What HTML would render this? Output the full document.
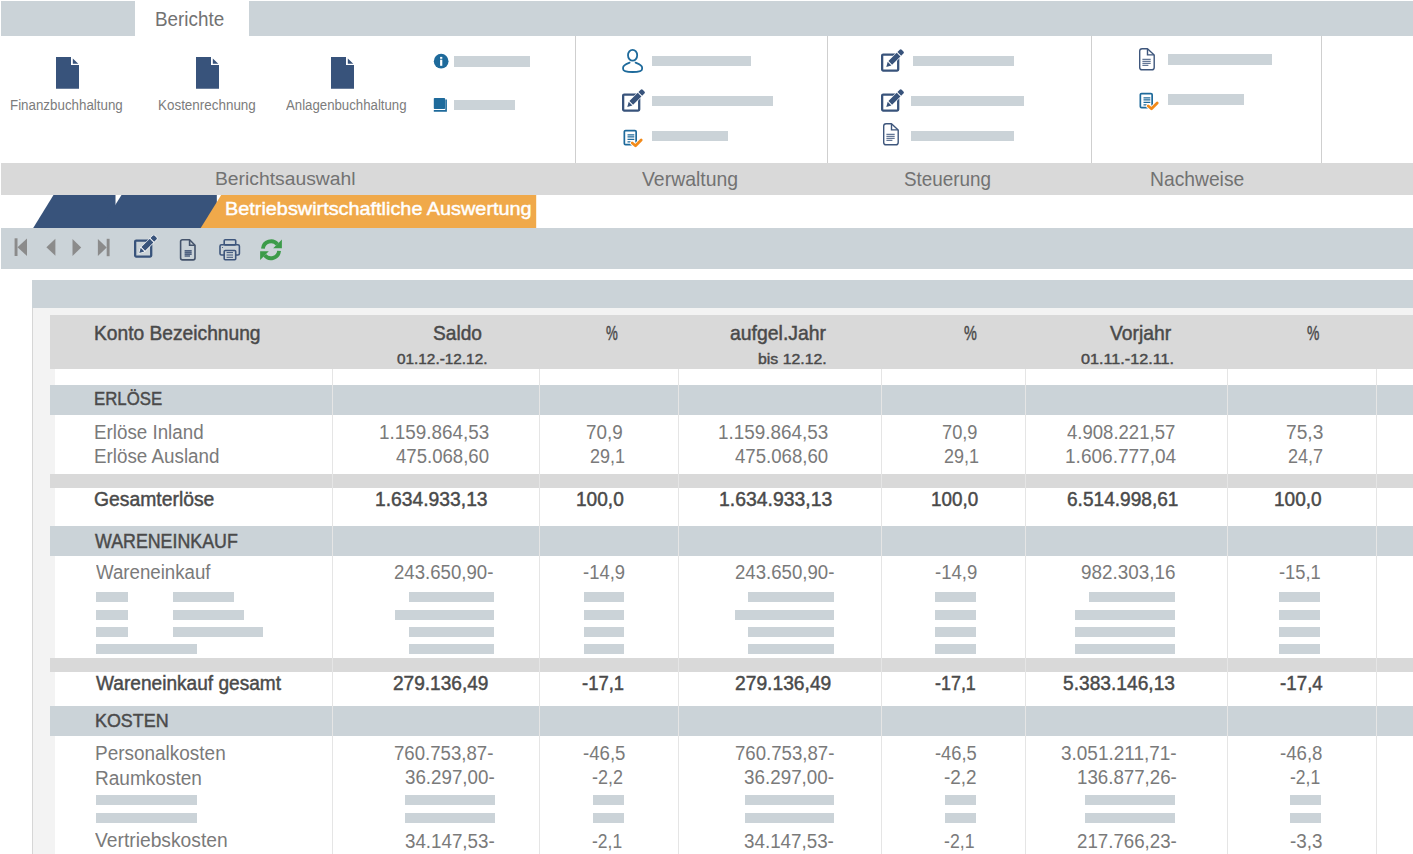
<!DOCTYPE html>
<html><head><meta charset="utf-8"><style>
html,body{margin:0;padding:0;}
body{width:1413px;height:854px;position:relative;overflow:hidden;background:#fff;font-family:"Liberation Sans",sans-serif;}
.t{position:absolute;white-space:nowrap;line-height:0;transform-origin:0 0;}
</style></head><body>
<div style="position:absolute;left:1px;top:1px;width:134px;height:35px;background:#cbd3d8;"></div>
<div style="position:absolute;left:249px;top:1px;width:1164px;height:35px;background:#cbd3d8;"></div>
<div class="t" style="left:155.30px;top:19.05px;font-size:20.06px;transform:scaleX(0.9407);color:#727272;">Berichte</div>
<div style="position:absolute;left:575px;top:36px;width:1px;height:127px;background:#cfcfcf;"></div>
<div style="position:absolute;left:827px;top:36px;width:1px;height:127px;background:#cfcfcf;"></div>
<div style="position:absolute;left:1091px;top:36px;width:1px;height:127px;background:#cfcfcf;"></div>
<div style="position:absolute;left:1321px;top:36px;width:1px;height:127px;background:#cfcfcf;"></div>
<div style="position:absolute;left:1px;top:163px;width:1412px;height:32px;background:#d9d9d9;"></div>
<div class="t" style="left:214.50px;top:179.25px;font-size:19.19px;transform:scaleX(1.0056);color:#727272;">Berichtsauswahl</div>
<div class="t" style="left:642.30px;top:179.25px;font-size:19.48px;transform:scaleX(0.9968);color:#727272;">Verwaltung</div>
<div class="t" style="left:903.65px;top:179.25px;font-size:19.48px;transform:scaleX(0.9690);color:#727272;">Steuerung</div>
<div class="t" style="left:1150.15px;top:179.25px;font-size:19.48px;transform:scaleX(0.9896);color:#727272;">Nachweise</div>
<div class="t" style="left:9.85px;top:104.51px;font-size:14.39px;transform:scaleX(0.9281);color:#7c7c7c;">Finanzbuchhaltung</div>
<div class="t" style="left:157.50px;top:104.51px;font-size:14.39px;transform:scaleX(0.9339);color:#7c7c7c;">Kostenrechnung</div>
<div class="t" style="left:286.00px;top:104.51px;font-size:14.39px;transform:scaleX(0.9197);color:#7c7c7c;">Anlagenbuchhaltung</div>
<svg style="position:absolute;left:56px;top:57px" width="24" height="32" viewBox="0 0 24 32"><path d="M0,0H15V8H23V31.7H0Z" fill="#38537b"/><path d="M16.8,1.4L22.3,6.8H16.8Z" fill="#38537b"/></svg>
<svg style="position:absolute;left:196px;top:57px" width="24" height="32" viewBox="0 0 24 32"><path d="M0,0H15V8H23V31.7H0Z" fill="#38537b"/><path d="M16.8,1.4L22.3,6.8H16.8Z" fill="#38537b"/></svg>
<svg style="position:absolute;left:331px;top:57px" width="24" height="32" viewBox="0 0 24 32"><path d="M0,0H15V8H23V31.7H0Z" fill="#38537b"/><path d="M16.8,1.4L22.3,6.8H16.8Z" fill="#38537b"/></svg>
<div style="position:absolute;left:454px;top:56px;width:76px;height:11px;background:#cbd3d8;"></div>
<div style="position:absolute;left:454px;top:100px;width:61px;height:10px;background:#cbd3d8;"></div>
<div style="position:absolute;left:652px;top:56px;width:99px;height:10px;background:#cbd3d8;"></div>
<div style="position:absolute;left:652px;top:96px;width:121px;height:10px;background:#cbd3d8;"></div>
<div style="position:absolute;left:652px;top:131px;width:76px;height:10px;background:#cbd3d8;"></div>
<div style="position:absolute;left:913px;top:56px;width:101px;height:10px;background:#cbd3d8;"></div>
<div style="position:absolute;left:911px;top:96px;width:113px;height:10px;background:#cbd3d8;"></div>
<div style="position:absolute;left:911px;top:131px;width:103px;height:10px;background:#cbd3d8;"></div>
<div style="position:absolute;left:1168px;top:54px;width:104px;height:11px;background:#cbd3d8;"></div>
<div style="position:absolute;left:1168px;top:94px;width:76px;height:11px;background:#cbd3d8;"></div>
<svg style="position:absolute;left:433px;top:53px" width="17" height="17" viewBox="0 0 17 17"><circle cx="8.15" cy="8.2" r="7.35" fill="#1e6a9b"/><rect x="7.1" y="6.7" width="2.2" height="6.1" fill="#fff"/><rect x="7.1" y="3.9" width="2.2" height="1.9" fill="#fff"/></svg>
<svg style="position:absolute;left:433px;top:97px" width="16" height="16" viewBox="0 0 16 16"><rect x="0.8" y="0.9" width="11.3" height="11.2" rx="0.8" fill="#1e6a9b"/><path d="M0.8,13.9H13.1V2.5" fill="none" stroke="#1e6a9b" stroke-width="1.6"/></svg>
<svg style="position:absolute;left:616px;top:44px" width="32" height="32" viewBox="616 44 32 32"><ellipse cx="632.6" cy="55.25" rx="4.6" ry="5.45" fill="none" stroke="#1e6a9b" stroke-width="1.8"/><path d="M629.6,62.6C626,64 623.1,65 623.1,67.5V69C623.1,71.2 628,72 632.6,72C637.2,72 642.1,71.2 642.1,69V67.5C642.1,65 639.2,64 635.6,62.6" fill="none" stroke="#1e6a9b" stroke-width="1.8" stroke-linecap="round"/></svg>
<svg style="position:absolute;left:621.7px;top:88.5px" width="25" height="24" viewBox="0 0 25 24"><rect x="1.15" y="5.55" width="16.05" height="16.05" rx="1" fill="none" stroke="#38537b" stroke-width="2.3"/><g transform="translate(5.3,17.9) rotate(-45)"><path d="M0,0L4.6,-2.6V2.6Z M5.6,-2.6H17.4V2.6H5.6Z M18.4,-2.6H21.6Q23,-2.6 23,-1.2V1.2Q23,2.6 21.6,2.6H18.4Z" fill="#38537b" stroke="#fff" stroke-width="1.2" paint-order="stroke"/></g></svg>
<svg style="position:absolute;left:881.1px;top:48.9px" width="25" height="24" viewBox="0 0 25 24"><rect x="1.15" y="5.55" width="16.05" height="16.05" rx="1" fill="none" stroke="#38537b" stroke-width="2.3"/><g transform="translate(5.3,17.9) rotate(-45)"><path d="M0,0L4.6,-2.6V2.6Z M5.6,-2.6H17.4V2.6H5.6Z M18.4,-2.6H21.6Q23,-2.6 23,-1.2V1.2Q23,2.6 21.6,2.6H18.4Z" fill="#38537b" stroke="#fff" stroke-width="1.2" paint-order="stroke"/></g></svg>
<svg style="position:absolute;left:881.1px;top:88.5px" width="25" height="24" viewBox="0 0 25 24"><rect x="1.15" y="5.55" width="16.05" height="16.05" rx="1" fill="none" stroke="#38537b" stroke-width="2.3"/><g transform="translate(5.3,17.9) rotate(-45)"><path d="M0,0L4.6,-2.6V2.6Z M5.6,-2.6H17.4V2.6H5.6Z M18.4,-2.6H21.6Q23,-2.6 23,-1.2V1.2Q23,2.6 21.6,2.6H18.4Z" fill="#38537b" stroke="#fff" stroke-width="1.2" paint-order="stroke"/></g></svg>
<svg style="position:absolute;left:622.5px;top:128.5px" width="22" height="20" viewBox="0 0 22 20"><rect x="1.35" y="1.55" width="11.8" height="14.1" rx="1.2" fill="#fff" stroke="#1e6a9b" stroke-width="1.7"/><path d="M4.5,5.9H11.3M4.5,7.9H11.3M4.5,10.4H11.3M4.5,12.9H8" stroke="#1e6a9b" stroke-width="1.3"/><path d="M9.2,14L12.5,16.8L18.2,11" fill="none" stroke="#fff" stroke-width="4.6" stroke-linecap="round" stroke-linejoin="round"/><path d="M9.2,14L12.5,16.8L18.2,11" fill="none" stroke="#f28a1a" stroke-width="2.8" stroke-linecap="round" stroke-linejoin="round"/></svg>
<svg style="position:absolute;left:1139.3px;top:92.2px" width="22" height="20" viewBox="0 0 22 20"><rect x="1.35" y="1.55" width="11.8" height="14.1" rx="1.2" fill="#fff" stroke="#1e6a9b" stroke-width="1.7"/><path d="M4.5,5.9H11.3M4.5,7.9H11.3M4.5,10.4H11.3M4.5,12.9H8" stroke="#1e6a9b" stroke-width="1.3"/><path d="M9.2,14L12.5,16.8L18.2,11" fill="none" stroke="#fff" stroke-width="4.6" stroke-linecap="round" stroke-linejoin="round"/><path d="M9.2,14L12.5,16.8L18.2,11" fill="none" stroke="#f28a1a" stroke-width="2.8" stroke-linecap="round" stroke-linejoin="round"/></svg>
<svg style="position:absolute;left:882px;top:123.3px" width="18" height="23" viewBox="0 0 18 23"><path d="M1.7,3.1Q1.7,0.7 4.1,0.7H9.5L16.2,7V19.4Q16.2,21.8 13.8,21.8H4.1Q1.7,21.8 1.7,19.4Z" fill="none" stroke="#3e567c" stroke-width="1.4" stroke-linejoin="round"/><path d="M9.5,0.9V6.9H16" fill="none" stroke="#3e567c" stroke-width="1.4"/><path d="M4.4,11.3H12.7M4.4,13.3H12.7M4.4,15.3H12.7M4.4,17.3H10.4" stroke="#3e567c" stroke-width="1"/></svg>
<svg style="position:absolute;left:1138.3px;top:47.7px" width="18" height="23" viewBox="0 0 18 23"><path d="M1.7,3.1Q1.7,0.7 4.1,0.7H9.5L16.2,7V19.4Q16.2,21.8 13.8,21.8H4.1Q1.7,21.8 1.7,19.4Z" fill="none" stroke="#3e567c" stroke-width="1.4" stroke-linejoin="round"/><path d="M9.5,0.9V6.9H16" fill="none" stroke="#3e567c" stroke-width="1.4"/><path d="M4.4,11.3H12.7M4.4,13.3H12.7M4.4,15.3H12.7M4.4,17.3H10.4" stroke="#3e567c" stroke-width="1"/></svg>
<svg style="position:absolute;left:0;top:195px" width="540" height="33" viewBox="0 195 540 33"><path d="M53.5,195H115.5V228H33.2Z" fill="#38537b"/><path d="M121.5,195H216.8V228H100.9Z" fill="#38537b"/><path d="M221.2,195H536.2V228H200.7Z" fill="#f0a94a"/></svg>
<div class="t" style="left:225.40px;top:209.45px;font-size:18.60px;transform:scaleX(1.0673);-webkit-text-stroke:0.45px #ffffff;color:#ffffff;">Betriebswirtschaftliche Auswertung</div>
<div style="position:absolute;left:1px;top:228px;width:1412px;height:41px;background:#cbd3d8;"></div>
<svg style="position:absolute;left:134px;top:235.3px" width="25" height="24" viewBox="0 0 25 24"><rect x="1.15" y="5.55" width="16.05" height="16.05" rx="1" fill="none" stroke="#38537b" stroke-width="2.3"/><g transform="translate(5.3,17.9) rotate(-45)"><path d="M0,0L4.6,-2.6V2.6Z M5.6,-2.6H17.4V2.6H5.6Z M18.4,-2.6H21.6Q23,-2.6 23,-1.2V1.2Q23,2.6 21.6,2.6H18.4Z" fill="#38537b" stroke="#fff" stroke-width="1.2" paint-order="stroke"/></g></svg>
<svg style="position:absolute;left:0;top:228px" width="120" height="40" viewBox="0 228 120 40"><rect x="14.6" y="238.3" width="2.9" height="17.7" fill="#8b8b8b"/><path d="M27,238.5L17.5,247.2L27,256Z" fill="#8b8b8b"/><path d="M55.4,238.8L46.4,247.3L55.4,255.8Z" fill="#8b8b8b"/><path d="M72.5,239L81.2,247.5L72.5,256Z" fill="#8b8b8b"/><path d="M97.9,239L106.7,247.5L97.9,256Z" fill="#8b8b8b"/><rect x="106.7" y="238.8" width="2.9" height="17.4" fill="#8b8b8b"/></svg>
<svg style="position:absolute;left:178.5px;top:238px" width="18" height="24" viewBox="0 0 18 24"><path d="M1.6,3.6Q1.6,1.7 3.5,1.7H10.6L16,7.2V20Q16,21.9 14.1,21.9H3.5Q1.6,21.9 1.6,20Z" fill="none" stroke="#44536b" stroke-width="1.6" stroke-linejoin="round"/><path d="M10.6,1.9V7.2H15.8" fill="none" stroke="#44536b" stroke-width="1.6"/><path d="M5.6,12.7H12.7M5.6,14.5H12.7M5.6,16.3H12.7M5.6,18.1H11" stroke="#4f6180" stroke-width="1.5"/></svg>
<svg style="position:absolute;left:214px;top:234px" width="30" height="30" viewBox="214 234 30 30"><rect x="224.2" y="239.8" width="11.5" height="5.2" rx="1" fill="none" stroke="#3e567c" stroke-width="1.6"/><rect x="220" y="244.8" width="19.4" height="10.2" rx="1.5" fill="none" stroke="#3e567c" stroke-width="1.6"/><rect x="224.2" y="250.5" width="11.5" height="9.2" rx="1" fill="#cbd3d8" stroke="#3e567c" stroke-width="1.6"/><path d="M226.6,252.6H233M226.6,255H233M226.6,257.3H233" stroke="#3e567c" stroke-width="1"/><circle cx="222.5" cy="247.5" r="0.6" fill="#3e567c"/></svg>
<svg style="position:absolute;left:256px;top:235px" width="30" height="30" viewBox="256 235 30 30"><path d="M262.9,248.6A8.2,8.2 0 0 1 277.3,244.2" fill="none" stroke="#3c9b49" stroke-width="3.8"/><path d="M273.2,248.2H281.9V239.5Z" fill="#3c9b49"/><path d="M279.1,250.9A8.2,8.2 0 0 1 264.7,255.3" fill="none" stroke="#3c9b49" stroke-width="3.8"/><path d="M268.8,251.3H260.1V260Z" fill="#3c9b49"/></svg>
<div style="position:absolute;left:32px;top:280px;width:1381px;height:28px;background:#cbd3d8;"></div>
<div style="position:absolute;left:32px;top:308px;width:1381px;height:546px;background:#f3f3f3;"></div>
<div style="position:absolute;left:32px;top:308px;width:1px;height:546px;background:#d6d6d6;"></div>
<div style="position:absolute;left:55px;top:369px;width:1358px;height:485px;background:#ffffff;"></div>
<div style="position:absolute;left:50px;top:315px;width:1363px;height:54px;background:#d9d9d9;"></div>
<div style="position:absolute;left:50px;top:385px;width:1363px;height:30px;background:#cbd3d8;"></div>
<div style="position:absolute;left:50px;top:474px;width:1363px;height:14px;background:#d9d9d9;"></div>
<div style="position:absolute;left:50px;top:526px;width:1363px;height:30px;background:#cbd3d8;"></div>
<div style="position:absolute;left:50px;top:658px;width:1363px;height:14px;background:#d9d9d9;"></div>
<div style="position:absolute;left:50px;top:706px;width:1363px;height:30px;background:#cbd3d8;"></div>
<div style="position:absolute;left:332px;top:369px;width:1px;height:485px;background:#e5e5e5;"></div>
<div style="position:absolute;left:539px;top:369px;width:1px;height:485px;background:#e5e5e5;"></div>
<div style="position:absolute;left:678px;top:369px;width:1px;height:485px;background:#e5e5e5;"></div>
<div style="position:absolute;left:881px;top:369px;width:1px;height:485px;background:#e5e5e5;"></div>
<div style="position:absolute;left:1025px;top:369px;width:1px;height:485px;background:#e5e5e5;"></div>
<div style="position:absolute;left:1227px;top:369px;width:1px;height:485px;background:#e5e5e5;"></div>
<div style="position:absolute;left:1376px;top:369px;width:1px;height:485px;background:#e5e5e5;"></div>
<div class="t" style="left:94.45px;top:332.95px;font-size:19.48px;transform:scaleX(0.9863);-webkit-text-stroke:0.45px #4a4a4a;color:#4a4a4a;">Konto Bezeichnung</div>
<div class="t" style="left:432.65px;top:332.95px;font-size:19.48px;transform:scaleX(0.9827);-webkit-text-stroke:0.45px #4a4a4a;color:#4a4a4a;">Saldo</div>
<div class="t" style="left:606.45px;top:332.95px;font-size:19.48px;transform:scaleX(0.6807);-webkit-text-stroke:0.45px #4a4a4a;color:#4a4a4a;">%</div>
<div class="t" style="left:730.35px;top:332.95px;font-size:19.48px;transform:scaleX(0.9973);-webkit-text-stroke:0.45px #4a4a4a;color:#4a4a4a;">aufgel.Jahr</div>
<div class="t" style="left:963.55px;top:332.95px;font-size:19.48px;transform:scaleX(0.7413);-webkit-text-stroke:0.45px #4a4a4a;color:#4a4a4a;">%</div>
<div class="t" style="left:1110.00px;top:332.95px;font-size:19.48px;transform:scaleX(0.9904);-webkit-text-stroke:0.45px #4a4a4a;color:#4a4a4a;">Vorjahr</div>
<div class="t" style="left:1307.40px;top:332.95px;font-size:19.48px;transform:scaleX(0.7153);-webkit-text-stroke:0.45px #4a4a4a;color:#4a4a4a;">%</div>
<div class="t" style="left:397.15px;top:358.86px;font-size:15.12px;transform:scaleX(1.0156);-webkit-text-stroke:0.45px #4a4a4a;color:#4a4a4a;">01.12.-12.12.</div>
<div class="t" style="left:757.70px;top:358.86px;font-size:15.12px;transform:scaleX(1.0476);-webkit-text-stroke:0.45px #4a4a4a;color:#4a4a4a;">bis 12.12.</div>
<div class="t" style="left:1081.35px;top:358.86px;font-size:15.12px;transform:scaleX(1.0709);-webkit-text-stroke:0.45px #4a4a4a;color:#4a4a4a;">01.11.-12.11.</div>
<div class="t" style="left:94.45px;top:399.10px;font-size:19.04px;transform:scaleX(0.8827);-webkit-text-stroke:0.45px #4a4a4a;color:#4a4a4a;">ERLÖSE</div>
<div class="t" style="left:95.15px;top:540.65px;font-size:19.48px;transform:scaleX(0.9145);-webkit-text-stroke:0.45px #4a4a4a;color:#4a4a4a;">WARENEINKAUF</div>
<div class="t" style="left:94.85px;top:720.70px;font-size:18.75px;transform:scaleX(0.9544);-webkit-text-stroke:0.45px #4a4a4a;color:#4a4a4a;">KOSTEN</div>
<div class="t" style="left:94.45px;top:431.65px;font-size:19.77px;transform:scaleX(0.9498);color:#7a7a7a;">Erlöse Inland</div>
<div class="t" style="left:94.45px;top:455.85px;font-size:19.77px;transform:scaleX(0.9518);color:#7a7a7a;">Erlöse Ausland</div>
<div class="t" style="left:95.60px;top:572.05px;font-size:19.77px;transform:scaleX(0.9450);color:#7a7a7a;">Wareneinkauf</div>
<div class="t" style="left:95.30px;top:752.85px;font-size:19.77px;transform:scaleX(0.9593);color:#7a7a7a;">Personalkosten</div>
<div class="t" style="left:95.30px;top:777.55px;font-size:19.77px;transform:scaleX(0.9636);color:#7a7a7a;">Raumkosten</div>
<div class="t" style="left:95.30px;top:840.35px;font-size:19.77px;transform:scaleX(0.9740);color:#7a7a7a;">Vertriebskosten</div>
<div class="t" style="left:379.15px;top:431.65px;font-size:19.77px;transform:scaleX(0.9550);color:#7a7a7a;">1.159.864,53</div>
<div class="t" style="left:395.65px;top:455.85px;font-size:19.77px;transform:scaleX(0.9405);color:#7a7a7a;">475.068,60</div>
<div class="t" style="left:586.40px;top:431.65px;font-size:19.77px;transform:scaleX(0.9532);color:#7a7a7a;">70,9</div>
<div class="t" style="left:589.50px;top:455.85px;font-size:19.77px;transform:scaleX(0.9090);color:#7a7a7a;">29,1</div>
<div class="t" style="left:717.90px;top:431.65px;font-size:19.77px;transform:scaleX(0.9563);color:#7a7a7a;">1.159.864,53</div>
<div class="t" style="left:735.20px;top:455.85px;font-size:19.77px;transform:scaleX(0.9410);color:#7a7a7a;">475.068,60</div>
<div class="t" style="left:942.40px;top:431.65px;font-size:19.77px;transform:scaleX(0.9220);color:#7a7a7a;">70,9</div>
<div class="t" style="left:944.30px;top:455.85px;font-size:19.77px;transform:scaleX(0.9090);color:#7a7a7a;">29,1</div>
<div class="t" style="left:1066.60px;top:431.65px;font-size:19.77px;transform:scaleX(0.9381);color:#7a7a7a;">4.908.221,57</div>
<div class="t" style="left:1064.50px;top:455.85px;font-size:19.77px;transform:scaleX(0.9633);color:#7a7a7a;">1.606.777,04</div>
<div class="t" style="left:1285.50px;top:431.65px;font-size:19.77px;transform:scaleX(0.9701);color:#7a7a7a;">75,3</div>
<div class="t" style="left:1287.85px;top:455.85px;font-size:19.77px;transform:scaleX(0.9116);color:#7a7a7a;">24,7</div>
<div class="t" style="left:394.25px;top:572.05px;font-size:19.77px;transform:scaleX(0.9417);color:#7a7a7a;">243.650,90-</div>
<div class="t" style="left:582.65px;top:572.05px;font-size:19.77px;transform:scaleX(0.9330);color:#7a7a7a;">-14,9</div>
<div class="t" style="left:734.50px;top:572.05px;font-size:19.77px;transform:scaleX(0.9417);color:#7a7a7a;">243.650,90-</div>
<div class="t" style="left:934.70px;top:572.05px;font-size:19.77px;transform:scaleX(0.9374);color:#7a7a7a;">-14,9</div>
<div class="t" style="left:1081.30px;top:572.05px;font-size:19.77px;transform:scaleX(0.9542);color:#7a7a7a;">982.303,16</div>
<div class="t" style="left:1278.70px;top:572.05px;font-size:19.77px;transform:scaleX(0.9263);color:#7a7a7a;">-15,1</div>
<div class="t" style="left:394.25px;top:752.65px;font-size:19.77px;transform:scaleX(0.9417);color:#7a7a7a;">760.753,87-</div>
<div class="t" style="left:404.70px;top:777.45px;font-size:19.77px;transform:scaleX(0.9488);color:#7a7a7a;">36.297,00-</div>
<div class="t" style="left:404.70px;top:840.55px;font-size:19.77px;transform:scaleX(0.9488);color:#7a7a7a;">34.147,53-</div>
<div class="t" style="left:582.65px;top:752.65px;font-size:19.77px;transform:scaleX(0.9419);color:#7a7a7a;">-46,5</div>
<div class="t" style="left:592.40px;top:777.45px;font-size:19.77px;transform:scaleX(0.9091);color:#7a7a7a;">-2,2</div>
<div class="t" style="left:592.40px;top:840.55px;font-size:19.77px;transform:scaleX(0.8842);color:#7a7a7a;">-2,1</div>
<div class="t" style="left:734.50px;top:752.65px;font-size:19.77px;transform:scaleX(0.9417);color:#7a7a7a;">760.753,87-</div>
<div class="t" style="left:743.85px;top:777.45px;font-size:19.77px;transform:scaleX(0.9530);color:#7a7a7a;">36.297,00-</div>
<div class="t" style="left:743.85px;top:840.55px;font-size:19.77px;transform:scaleX(0.9509);color:#7a7a7a;">34.147,53-</div>
<div class="t" style="left:934.85px;top:752.65px;font-size:19.77px;transform:scaleX(0.9275);color:#7a7a7a;">-46,5</div>
<div class="t" style="left:944.30px;top:777.45px;font-size:19.77px;transform:scaleX(0.9590);color:#7a7a7a;">-2,2</div>
<div class="t" style="left:944.30px;top:840.55px;font-size:19.77px;transform:scaleX(0.8945);color:#7a7a7a;">-2,1</div>
<div class="t" style="left:1061.45px;top:752.65px;font-size:19.77px;transform:scaleX(0.9591);color:#7a7a7a;">3.051.211,71-</div>
<div class="t" style="left:1077.25px;top:777.45px;font-size:19.77px;transform:scaleX(0.9459);color:#7a7a7a;">136.877,26-</div>
<div class="t" style="left:1077.25px;top:840.55px;font-size:19.77px;transform:scaleX(0.9459);color:#7a7a7a;">217.766,23-</div>
<div class="t" style="left:1279.65px;top:752.65px;font-size:19.77px;transform:scaleX(0.9419);color:#7a7a7a;">-46,8</div>
<div class="t" style="left:1289.50px;top:777.45px;font-size:19.77px;transform:scaleX(0.8871);color:#7a7a7a;">-2,1</div>
<div class="t" style="left:1289.50px;top:840.55px;font-size:19.77px;transform:scaleX(0.9531);color:#7a7a7a;">-3,3</div>
<div class="t" style="left:94.45px;top:499.45px;font-size:19.77px;transform:scaleX(0.9784);-webkit-text-stroke:0.45px #4a4a4a;color:#4a4a4a;">Gesamterlöse</div>
<div class="t" style="left:375.05px;top:499.45px;font-size:19.77px;transform:scaleX(0.9754);-webkit-text-stroke:0.45px #4a4a4a;color:#4a4a4a;">1.634.933,13</div>
<div class="t" style="left:576.30px;top:499.45px;font-size:19.77px;transform:scaleX(0.9653);-webkit-text-stroke:0.45px #4a4a4a;color:#4a4a4a;">100,0</div>
<div class="t" style="left:719.30px;top:499.45px;font-size:19.77px;transform:scaleX(0.9810);-webkit-text-stroke:0.45px #4a4a4a;color:#4a4a4a;">1.634.933,13</div>
<div class="t" style="left:931.45px;top:499.45px;font-size:19.77px;transform:scaleX(0.9532);-webkit-text-stroke:0.45px #4a4a4a;color:#4a4a4a;">100,0</div>
<div class="t" style="left:1066.60px;top:499.45px;font-size:19.77px;transform:scaleX(0.9654);-webkit-text-stroke:0.45px #4a4a4a;color:#4a4a4a;">6.514.998,61</div>
<div class="t" style="left:1274.25px;top:499.45px;font-size:19.77px;transform:scaleX(0.9643);-webkit-text-stroke:0.45px #4a4a4a;color:#4a4a4a;">100,0</div>
<div class="t" style="left:95.55px;top:683.45px;font-size:19.77px;transform:scaleX(0.9663);-webkit-text-stroke:0.45px #4a4a4a;color:#4a4a4a;">Wareneinkauf gesamt</div>
<div class="t" style="left:393.40px;top:683.45px;font-size:19.77px;transform:scaleX(0.9648);-webkit-text-stroke:0.45px #4a4a4a;color:#4a4a4a;">279.136,49</div>
<div class="t" style="left:581.80px;top:683.45px;font-size:19.77px;transform:scaleX(0.9341);-webkit-text-stroke:0.45px #4a4a4a;color:#4a4a4a;">-17,1</div>
<div class="t" style="left:735.20px;top:683.45px;font-size:19.77px;transform:scaleX(0.9734);-webkit-text-stroke:0.45px #4a4a4a;color:#4a4a4a;">279.136,49</div>
<div class="t" style="left:935.40px;top:683.45px;font-size:19.77px;transform:scaleX(0.9064);-webkit-text-stroke:0.45px #4a4a4a;color:#4a4a4a;">-17,1</div>
<div class="t" style="left:1063.00px;top:683.45px;font-size:19.77px;transform:scaleX(0.9702);-webkit-text-stroke:0.45px #4a4a4a;color:#4a4a4a;">5.383.146,13</div>
<div class="t" style="left:1280.00px;top:683.45px;font-size:19.77px;transform:scaleX(0.9496);-webkit-text-stroke:0.45px #4a4a4a;color:#4a4a4a;">-17,4</div>
<div style="position:absolute;left:96.3px;top:592px;width:31.6px;height:10px;background:#cbd3d8;"></div>
<div style="position:absolute;left:173.1px;top:592px;width:60.9px;height:10px;background:#cbd3d8;"></div>
<div style="position:absolute;left:96.3px;top:609.5px;width:31.6px;height:10px;background:#cbd3d8;"></div>
<div style="position:absolute;left:173.1px;top:609.5px;width:70.9px;height:10px;background:#cbd3d8;"></div>
<div style="position:absolute;left:96.3px;top:627px;width:31.6px;height:10px;background:#cbd3d8;"></div>
<div style="position:absolute;left:173.1px;top:627px;width:89.9px;height:10px;background:#cbd3d8;"></div>
<div style="position:absolute;left:96.3px;top:644px;width:101px;height:10px;background:#cbd3d8;"></div>
<div style="position:absolute;left:408.6px;top:592px;width:85.4px;height:10px;background:#cbd3d8;"></div>
<div style="position:absolute;left:394.9px;top:609.5px;width:99.1px;height:10px;background:#cbd3d8;"></div>
<div style="position:absolute;left:408.6px;top:627px;width:85.4px;height:10px;background:#cbd3d8;"></div>
<div style="position:absolute;left:408.6px;top:644px;width:85.4px;height:10px;background:#cbd3d8;"></div>
<div style="position:absolute;left:583.7px;top:592px;width:40.3px;height:10px;background:#cbd3d8;"></div>
<div style="position:absolute;left:583.7px;top:609.5px;width:40.3px;height:10px;background:#cbd3d8;"></div>
<div style="position:absolute;left:583.7px;top:627px;width:40.3px;height:10px;background:#cbd3d8;"></div>
<div style="position:absolute;left:583.7px;top:644px;width:40.3px;height:10px;background:#cbd3d8;"></div>
<div style="position:absolute;left:747.7px;top:592px;width:85.9px;height:10px;background:#cbd3d8;"></div>
<div style="position:absolute;left:734.5px;top:609.5px;width:99.1px;height:10px;background:#cbd3d8;"></div>
<div style="position:absolute;left:747.7px;top:627px;width:85.9px;height:10px;background:#cbd3d8;"></div>
<div style="position:absolute;left:747.7px;top:644px;width:85.9px;height:10px;background:#cbd3d8;"></div>
<div style="position:absolute;left:934.9px;top:592px;width:40.7px;height:10px;background:#cbd3d8;"></div>
<div style="position:absolute;left:934.9px;top:609.5px;width:40.7px;height:10px;background:#cbd3d8;"></div>
<div style="position:absolute;left:934.9px;top:627px;width:40.7px;height:10px;background:#cbd3d8;"></div>
<div style="position:absolute;left:934.9px;top:644px;width:40.7px;height:10px;background:#cbd3d8;"></div>
<div style="position:absolute;left:1089.1px;top:592px;width:85.9px;height:10px;background:#cbd3d8;"></div>
<div style="position:absolute;left:1075px;top:609.5px;width:100px;height:10px;background:#cbd3d8;"></div>
<div style="position:absolute;left:1075px;top:627px;width:100px;height:10px;background:#cbd3d8;"></div>
<div style="position:absolute;left:1075px;top:644px;width:100px;height:10px;background:#cbd3d8;"></div>
<div style="position:absolute;left:1279.4px;top:592px;width:40.6px;height:10px;background:#cbd3d8;"></div>
<div style="position:absolute;left:1279.4px;top:609.5px;width:40.6px;height:10px;background:#cbd3d8;"></div>
<div style="position:absolute;left:1279.4px;top:627px;width:40.6px;height:10px;background:#cbd3d8;"></div>
<div style="position:absolute;left:1279.4px;top:644px;width:40.6px;height:10px;background:#cbd3d8;"></div>
<div style="position:absolute;left:96px;top:795px;width:101px;height:10px;background:#cbd3d8;"></div>
<div style="position:absolute;left:96px;top:813px;width:101px;height:10px;background:#cbd3d8;"></div>
<div style="position:absolute;left:405px;top:795px;width:89.7px;height:10px;background:#cbd3d8;"></div>
<div style="position:absolute;left:405px;top:813px;width:89.7px;height:10px;background:#cbd3d8;"></div>
<div style="position:absolute;left:593.1px;top:795px;width:30.9px;height:10px;background:#cbd3d8;"></div>
<div style="position:absolute;left:593.1px;top:813px;width:30.9px;height:10px;background:#cbd3d8;"></div>
<div style="position:absolute;left:744.6px;top:795px;width:89.8px;height:10px;background:#cbd3d8;"></div>
<div style="position:absolute;left:744.6px;top:813px;width:89.8px;height:10px;background:#cbd3d8;"></div>
<div style="position:absolute;left:945px;top:795px;width:30.9px;height:10px;background:#cbd3d8;"></div>
<div style="position:absolute;left:945px;top:813px;width:30.9px;height:10px;background:#cbd3d8;"></div>
<div style="position:absolute;left:1085px;top:795px;width:90px;height:10px;background:#cbd3d8;"></div>
<div style="position:absolute;left:1085px;top:813px;width:90px;height:10px;background:#cbd3d8;"></div>
<div style="position:absolute;left:1290.2px;top:795px;width:30.7px;height:10px;background:#cbd3d8;"></div>
<div style="position:absolute;left:1290.2px;top:813px;width:30.7px;height:10px;background:#cbd3d8;"></div>
</body></html>
